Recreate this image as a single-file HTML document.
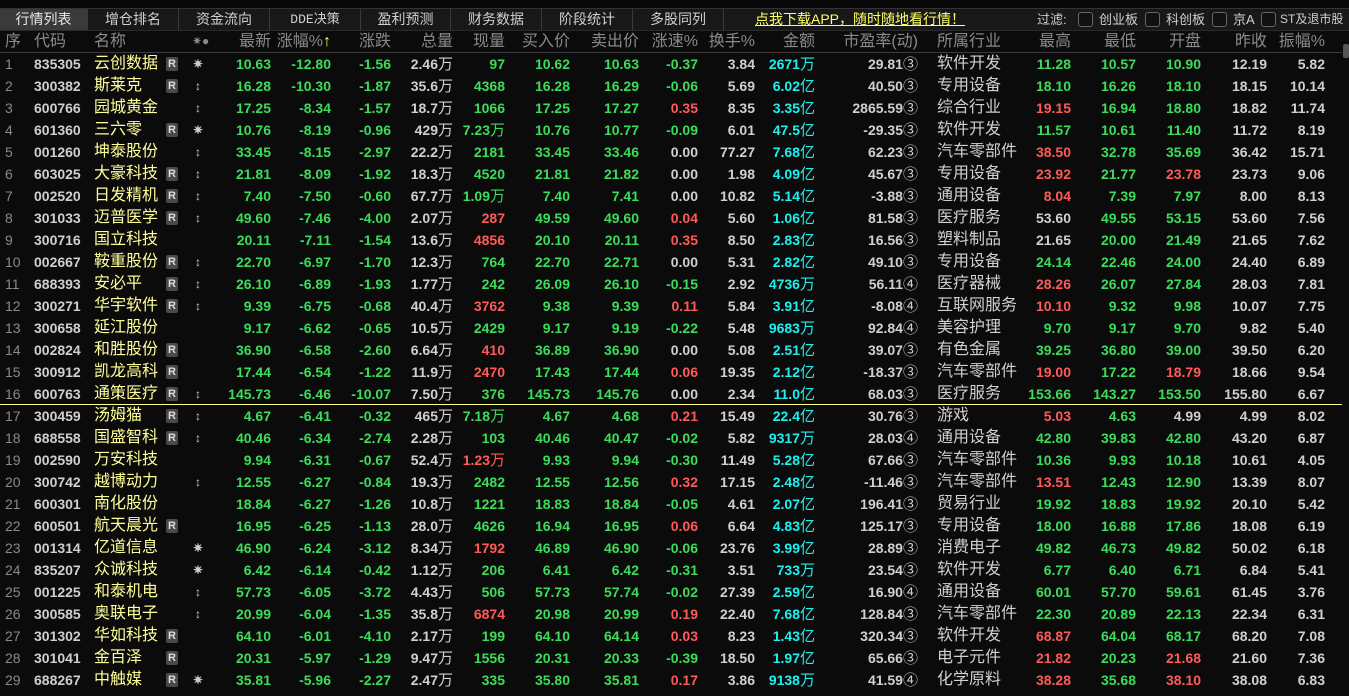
<!DOCTYPE html>
<html><head><meta charset="utf-8">
<style>
*{margin:0;padding:0;box-sizing:border-box}
html,body{width:1349px;height:696px;overflow:hidden;background:#0b0b0b;font-family:"Liberation Sans","Noto Sans CJK SC",sans-serif;color:#d0d0d0}
#top{position:absolute;left:0;top:0;width:1349px;height:9px;background:#080808;border-bottom:1px solid #333}
#tabs{position:absolute;left:0;top:9px;width:1349px;height:22px;background:#181818;border-bottom:1px solid #2a2a2a}
.tab{position:absolute;top:0;height:21px;line-height:21px;text-align:center;font-size:14px;color:#cfcfcf;border-right:1px solid #3a3a3a}
.tab.act{background:#3a3a3a;color:#e8e8e8}
#link{position:absolute;left:755px;top:0;line-height:21px;font-size:14px;color:#ffff66;text-decoration:underline}
.flt{position:absolute;top:0;line-height:21px;font-size:13px;color:#cfcfcf;white-space:nowrap}
.cb{position:absolute;top:3px;width:15px;height:15px;border:1px solid #666;border-radius:3px;background:#111}
#hdr{position:absolute;left:0;top:31px;width:1342px;height:22px;border-bottom:1px solid #3a3a3a}
#hdr span{position:absolute;top:0;line-height:21px;font-size:16px;color:#8a8a8a;white-space:nowrap}
#rows{position:absolute;left:0;top:53px;width:1342px}
.r{position:absolute;left:0;height:22px;width:1342px}
.r span{position:absolute;top:0;line-height:22px;white-space:nowrap;font-size:14px;font-weight:bold}
.r span:nth-child(1){left:5px;color:#8a8a8a;font-weight:normal}
.r span:nth-child(2){left:34px;color:#d0d0d0}
.r span:nth-child(3){left:94px;color:#ffff99;font-size:16px;font-weight:normal}
.r span:nth-child(4){left:166px}
.r span:nth-child(5){left:192px;width:12px;text-align:center;color:#ccc;font-size:12px}
.r span:nth-child(6){right:1071px}
.r span:nth-child(7){right:1011px}
.r span:nth-child(8){right:951px}
.r span:nth-child(9){right:889px}
.r span:nth-child(10){right:837px}
.r span:nth-child(11){right:772px}
.r span:nth-child(12){right:703px}
.r span:nth-child(13){right:644px}
.r span:nth-child(14){right:587px}
.r span:nth-child(15){right:527px;color:#1ef0f0}
.r span:nth-child(16){right:424px}
.r span:nth-child(17){left:937px;font-size:16px;font-weight:normal;color:#d0d0d0}
.r span:nth-child(18){right:271px}
.r span:nth-child(19){right:206px}
.r span:nth-child(20){right:141px}
.r span:nth-child(21){right:75px}
.r span:nth-child(22){right:17px}
.r span:nth-child(6),.r span:nth-child(7),.r span:nth-child(8),.r span:nth-child(11),.r span:nth-child(12){color:#3ddc5a}
i{font-style:normal;font-weight:normal;font-size:15px}
.g{color:#3ddc5a!important}.d{color:#ff5a5a!important}.w{color:#d0d0d0!important}
b.R{position:absolute;top:4px;left:0;width:12px;height:14px;background:#4a4a4a;border-radius:2px;color:#ddd;font-size:11px;line-height:14px;text-align:center;font-weight:bold}
#sep{position:absolute;left:0;top:404px;width:1342px;height:1px;background:#ffff88}
#sb{position:absolute;left:1342px;top:31px;width:7px;height:665px;background:#0b0b0b}
#sbt{position:absolute;left:1343px;top:44px;width:6px;height:14px;background:#555;border-radius:2px}
</style></head><body>
<div id="top"></div>
<div id="tabs">
<div class="tab act" style="left:0;width:88px">行情列表</div>
<div class="tab" style="left:88px;width:91px">增仓排名</div>
<div class="tab" style="left:179px;width:91px">资金流向</div>
<div class="tab" style="left:270px;width:91px;font-family:'Liberation Mono','Noto Sans CJK SC',monospace;font-size:13px">DDE决策</div>
<div class="tab" style="left:361px;width:90px">盈利预测</div>
<div class="tab" style="left:451px;width:91px">财务数据</div>
<div class="tab" style="left:542px;width:91px">阶段统计</div>
<div class="tab" style="left:633px;width:91px">多股同列</div>
<div id="link">点我下载APP，随时随地看行情！</div>
<div class="flt" style="left:1037px">过滤:</div>
<div class="cb" style="left:1078px"></div><div class="flt" style="left:1099px">创业板</div>
<div class="cb" style="left:1145px"></div><div class="flt" style="left:1166px">科创板</div>
<div class="cb" style="left:1212px"></div><div class="flt" style="left:1233px">京A</div>
<div class="cb" style="left:1261px"></div><div class="flt" style="left:1280px;font-size:12px">ST及退市股</div>
</div>
<div id="hdr">
<span style="left:5px">序</span><span style="left:34px">代码</span><span style="left:94px">名称</span>
<span style="left:192px;font-size:12px">✷●</span>
<span style="right:1071px">最新</span><span style="right:1011px">涨幅%<b style="color:#ffff66">↑</b></span>
<span style="right:951px">涨跌</span><span style="right:889px">总量</span><span style="right:837px">现量</span>
<span style="right:772px">买入价</span><span style="right:703px">卖出价</span><span style="right:644px">涨速%</span>
<span style="right:587px">换手%</span><span style="right:527px">金额</span><span style="right:424px">市盈率(动)</span>
<span style="left:937px">所属行业</span><span style="right:271px">最高</span><span style="right:206px">最低</span>
<span style="right:141px">开盘</span><span style="right:75px">昨收</span><span style="right:17px">振幅%</span>
</div>
<div id="rows">
<div class="r" style="top:0px"><span>1</span><span>835305</span><span>云创数据</span><span><b class="R">R</b></span><span>✷</span><span>10.63</span><span>-12.80</span><span>-1.56</span><span>2.46<i>万</i></span><span class="g">97</span><span>10.62</span><span>10.63</span><span class="g">-0.37</span><span>3.84</span><span>2671<i>万</i></span><span>29.81<i>③</i></span><span>软件开发</span><span class="g">11.28</span><span class="g">10.57</span><span class="g">10.90</span><span>12.19</span><span>5.82</span></div>
<div class="r" style="top:22px"><span>2</span><span>300382</span><span>斯莱克</span><span><b class="R">R</b></span><span>↕</span><span>16.28</span><span>-10.30</span><span>-1.87</span><span>35.6<i>万</i></span><span class="g">4368</span><span>16.28</span><span>16.29</span><span class="g">-0.06</span><span>5.69</span><span>6.02<i>亿</i></span><span>40.50<i>③</i></span><span>专用设备</span><span class="g">18.10</span><span class="g">16.26</span><span class="g">18.10</span><span>18.15</span><span>10.14</span></div>
<div class="r" style="top:44px"><span>3</span><span>600766</span><span>园城黄金</span><span></span><span>↕</span><span>17.25</span><span>-8.34</span><span>-1.57</span><span>18.7<i>万</i></span><span class="g">1066</span><span>17.25</span><span>17.27</span><span class="d">0.35</span><span>8.35</span><span>3.35<i>亿</i></span><span>2865.59<i>③</i></span><span>综合行业</span><span class="d">19.15</span><span class="g">16.94</span><span class="g">18.80</span><span>18.82</span><span>11.74</span></div>
<div class="r" style="top:66px"><span>4</span><span>601360</span><span>三六零</span><span><b class="R">R</b></span><span>✷</span><span>10.76</span><span>-8.19</span><span>-0.96</span><span>429<i>万</i></span><span class="g">7.23<i>万</i></span><span>10.76</span><span>10.77</span><span class="g">-0.09</span><span>6.01</span><span>47.5<i>亿</i></span><span>-29.35<i>③</i></span><span>软件开发</span><span class="g">11.57</span><span class="g">10.61</span><span class="g">11.40</span><span>11.72</span><span>8.19</span></div>
<div class="r" style="top:88px"><span>5</span><span>001260</span><span>坤泰股份</span><span></span><span>↕</span><span>33.45</span><span>-8.15</span><span>-2.97</span><span>22.2<i>万</i></span><span class="g">2181</span><span>33.45</span><span>33.46</span><span class="w">0.00</span><span>77.27</span><span>7.68<i>亿</i></span><span>62.23<i>③</i></span><span>汽车零部件</span><span class="d">38.50</span><span class="g">32.78</span><span class="g">35.69</span><span>36.42</span><span>15.71</span></div>
<div class="r" style="top:110px"><span>6</span><span>603025</span><span>大豪科技</span><span><b class="R">R</b></span><span>↕</span><span>21.81</span><span>-8.09</span><span>-1.92</span><span>18.3<i>万</i></span><span class="g">4520</span><span>21.81</span><span>21.82</span><span class="w">0.00</span><span>1.98</span><span>4.09<i>亿</i></span><span>45.67<i>③</i></span><span>专用设备</span><span class="d">23.92</span><span class="g">21.77</span><span class="d">23.78</span><span>23.73</span><span>9.06</span></div>
<div class="r" style="top:132px"><span>7</span><span>002520</span><span>日发精机</span><span><b class="R">R</b></span><span>↕</span><span>7.40</span><span>-7.50</span><span>-0.60</span><span>67.7<i>万</i></span><span class="g">1.09<i>万</i></span><span>7.40</span><span>7.41</span><span class="w">0.00</span><span>10.82</span><span>5.14<i>亿</i></span><span>-3.88<i>③</i></span><span>通用设备</span><span class="d">8.04</span><span class="g">7.39</span><span class="g">7.97</span><span>8.00</span><span>8.13</span></div>
<div class="r" style="top:154px"><span>8</span><span>301033</span><span>迈普医学</span><span><b class="R">R</b></span><span>↕</span><span>49.60</span><span>-7.46</span><span>-4.00</span><span>2.07<i>万</i></span><span class="d">287</span><span>49.59</span><span>49.60</span><span class="d">0.04</span><span>5.60</span><span>1.06<i>亿</i></span><span>81.58<i>③</i></span><span>医疗服务</span><span class="w">53.60</span><span class="g">49.55</span><span class="g">53.15</span><span>53.60</span><span>7.56</span></div>
<div class="r" style="top:176px"><span>9</span><span>300716</span><span>国立科技</span><span></span><span></span><span>20.11</span><span>-7.11</span><span>-1.54</span><span>13.6<i>万</i></span><span class="d">4856</span><span>20.10</span><span>20.11</span><span class="d">0.35</span><span>8.50</span><span>2.83<i>亿</i></span><span>16.56<i>③</i></span><span>塑料制品</span><span class="w">21.65</span><span class="g">20.00</span><span class="g">21.49</span><span>21.65</span><span>7.62</span></div>
<div class="r" style="top:198px"><span>10</span><span>002667</span><span>鞍重股份</span><span><b class="R">R</b></span><span>↕</span><span>22.70</span><span>-6.97</span><span>-1.70</span><span>12.3<i>万</i></span><span class="g">764</span><span>22.70</span><span>22.71</span><span class="w">0.00</span><span>5.31</span><span>2.82<i>亿</i></span><span>49.10<i>③</i></span><span>专用设备</span><span class="g">24.14</span><span class="g">22.46</span><span class="g">24.00</span><span>24.40</span><span>6.89</span></div>
<div class="r" style="top:220px"><span>11</span><span>688393</span><span>安必平</span><span><b class="R">R</b></span><span>↕</span><span>26.10</span><span>-6.89</span><span>-1.93</span><span>1.77<i>万</i></span><span class="g">242</span><span>26.09</span><span>26.10</span><span class="g">-0.15</span><span>2.92</span><span>4736<i>万</i></span><span>56.11<i>④</i></span><span>医疗器械</span><span class="d">28.26</span><span class="g">26.07</span><span class="g">27.84</span><span>28.03</span><span>7.81</span></div>
<div class="r" style="top:242px"><span>12</span><span>300271</span><span>华宇软件</span><span><b class="R">R</b></span><span>↕</span><span>9.39</span><span>-6.75</span><span>-0.68</span><span>40.4<i>万</i></span><span class="d">3762</span><span>9.38</span><span>9.39</span><span class="d">0.11</span><span>5.84</span><span>3.91<i>亿</i></span><span>-8.08<i>④</i></span><span>互联网服务</span><span class="d">10.10</span><span class="g">9.32</span><span class="g">9.98</span><span>10.07</span><span>7.75</span></div>
<div class="r" style="top:264px"><span>13</span><span>300658</span><span>延江股份</span><span></span><span></span><span>9.17</span><span>-6.62</span><span>-0.65</span><span>10.5<i>万</i></span><span class="g">2429</span><span>9.17</span><span>9.19</span><span class="g">-0.22</span><span>5.48</span><span>9683<i>万</i></span><span>92.84<i>④</i></span><span>美容护理</span><span class="g">9.70</span><span class="g">9.17</span><span class="g">9.70</span><span>9.82</span><span>5.40</span></div>
<div class="r" style="top:286px"><span>14</span><span>002824</span><span>和胜股份</span><span><b class="R">R</b></span><span></span><span>36.90</span><span>-6.58</span><span>-2.60</span><span>6.64<i>万</i></span><span class="d">410</span><span>36.89</span><span>36.90</span><span class="w">0.00</span><span>5.08</span><span>2.51<i>亿</i></span><span>39.07<i>③</i></span><span>有色金属</span><span class="g">39.25</span><span class="g">36.80</span><span class="g">39.00</span><span>39.50</span><span>6.20</span></div>
<div class="r" style="top:308px"><span>15</span><span>300912</span><span>凯龙高科</span><span><b class="R">R</b></span><span></span><span>17.44</span><span>-6.54</span><span>-1.22</span><span>11.9<i>万</i></span><span class="d">2470</span><span>17.43</span><span>17.44</span><span class="d">0.06</span><span>19.35</span><span>2.12<i>亿</i></span><span>-18.37<i>③</i></span><span>汽车零部件</span><span class="d">19.00</span><span class="g">17.22</span><span class="d">18.79</span><span>18.66</span><span>9.54</span></div>
<div class="r" style="top:330px"><span>16</span><span>600763</span><span>通策医疗</span><span><b class="R">R</b></span><span>↕</span><span>145.73</span><span>-6.46</span><span>-10.07</span><span>7.50<i>万</i></span><span class="g">376</span><span>145.73</span><span>145.76</span><span class="w">0.00</span><span>2.34</span><span>11.0<i>亿</i></span><span>68.03<i>③</i></span><span>医疗服务</span><span class="g">153.66</span><span class="g">143.27</span><span class="g">153.50</span><span>155.80</span><span>6.67</span></div>
<div class="r" style="top:352px"><span>17</span><span>300459</span><span>汤姆猫</span><span><b class="R">R</b></span><span>↕</span><span>4.67</span><span>-6.41</span><span>-0.32</span><span>465<i>万</i></span><span class="g">7.18<i>万</i></span><span>4.67</span><span>4.68</span><span class="d">0.21</span><span>15.49</span><span>22.4<i>亿</i></span><span>30.76<i>③</i></span><span>游戏</span><span class="d">5.03</span><span class="g">4.63</span><span class="w">4.99</span><span>4.99</span><span>8.02</span></div>
<div class="r" style="top:374px"><span>18</span><span>688558</span><span>国盛智科</span><span><b class="R">R</b></span><span>↕</span><span>40.46</span><span>-6.34</span><span>-2.74</span><span>2.28<i>万</i></span><span class="g">103</span><span>40.46</span><span>40.47</span><span class="g">-0.02</span><span>5.82</span><span>9317<i>万</i></span><span>28.03<i>④</i></span><span>通用设备</span><span class="g">42.80</span><span class="g">39.83</span><span class="g">42.80</span><span>43.20</span><span>6.87</span></div>
<div class="r" style="top:396px"><span>19</span><span>002590</span><span>万安科技</span><span></span><span></span><span>9.94</span><span>-6.31</span><span>-0.67</span><span>52.4<i>万</i></span><span class="d">1.23<i>万</i></span><span>9.93</span><span>9.94</span><span class="g">-0.30</span><span>11.49</span><span>5.28<i>亿</i></span><span>67.66<i>③</i></span><span>汽车零部件</span><span class="g">10.36</span><span class="g">9.93</span><span class="g">10.18</span><span>10.61</span><span>4.05</span></div>
<div class="r" style="top:418px"><span>20</span><span>300742</span><span>越博动力</span><span></span><span>↕</span><span>12.55</span><span>-6.27</span><span>-0.84</span><span>19.3<i>万</i></span><span class="g">2482</span><span>12.55</span><span>12.56</span><span class="d">0.32</span><span>17.15</span><span>2.48<i>亿</i></span><span>-11.46<i>③</i></span><span>汽车零部件</span><span class="d">13.51</span><span class="g">12.43</span><span class="g">12.90</span><span>13.39</span><span>8.07</span></div>
<div class="r" style="top:440px"><span>21</span><span>600301</span><span>南化股份</span><span></span><span></span><span>18.84</span><span>-6.27</span><span>-1.26</span><span>10.8<i>万</i></span><span class="g">1221</span><span>18.83</span><span>18.84</span><span class="g">-0.05</span><span>4.61</span><span>2.07<i>亿</i></span><span>196.41<i>③</i></span><span>贸易行业</span><span class="g">19.92</span><span class="g">18.83</span><span class="g">19.92</span><span>20.10</span><span>5.42</span></div>
<div class="r" style="top:462px"><span>22</span><span>600501</span><span>航天晨光</span><span><b class="R">R</b></span><span></span><span>16.95</span><span>-6.25</span><span>-1.13</span><span>28.0<i>万</i></span><span class="g">4626</span><span>16.94</span><span>16.95</span><span class="d">0.06</span><span>6.64</span><span>4.83<i>亿</i></span><span>125.17<i>③</i></span><span>专用设备</span><span class="g">18.00</span><span class="g">16.88</span><span class="g">17.86</span><span>18.08</span><span>6.19</span></div>
<div class="r" style="top:484px"><span>23</span><span>001314</span><span>亿道信息</span><span></span><span>✷</span><span>46.90</span><span>-6.24</span><span>-3.12</span><span>8.34<i>万</i></span><span class="d">1792</span><span>46.89</span><span>46.90</span><span class="g">-0.06</span><span>23.76</span><span>3.99<i>亿</i></span><span>28.89<i>③</i></span><span>消费电子</span><span class="g">49.82</span><span class="g">46.73</span><span class="g">49.82</span><span>50.02</span><span>6.18</span></div>
<div class="r" style="top:506px"><span>24</span><span>835207</span><span>众诚科技</span><span></span><span>✷</span><span>6.42</span><span>-6.14</span><span>-0.42</span><span>1.12<i>万</i></span><span class="g">206</span><span>6.41</span><span>6.42</span><span class="g">-0.31</span><span>3.51</span><span>733<i>万</i></span><span>23.54<i>③</i></span><span>软件开发</span><span class="g">6.77</span><span class="g">6.40</span><span class="g">6.71</span><span>6.84</span><span>5.41</span></div>
<div class="r" style="top:528px"><span>25</span><span>001225</span><span>和泰机电</span><span></span><span>↕</span><span>57.73</span><span>-6.05</span><span>-3.72</span><span>4.43<i>万</i></span><span class="g">506</span><span>57.73</span><span>57.74</span><span class="g">-0.02</span><span>27.39</span><span>2.59<i>亿</i></span><span>16.90<i>④</i></span><span>通用设备</span><span class="g">60.01</span><span class="g">57.70</span><span class="g">59.61</span><span>61.45</span><span>3.76</span></div>
<div class="r" style="top:550px"><span>26</span><span>300585</span><span>奥联电子</span><span></span><span>↕</span><span>20.99</span><span>-6.04</span><span>-1.35</span><span>35.8<i>万</i></span><span class="d">6874</span><span>20.98</span><span>20.99</span><span class="d">0.19</span><span>22.40</span><span>7.68<i>亿</i></span><span>128.84<i>③</i></span><span>汽车零部件</span><span class="g">22.30</span><span class="g">20.89</span><span class="g">22.13</span><span>22.34</span><span>6.31</span></div>
<div class="r" style="top:572px"><span>27</span><span>301302</span><span>华如科技</span><span><b class="R">R</b></span><span></span><span>64.10</span><span>-6.01</span><span>-4.10</span><span>2.17<i>万</i></span><span class="g">199</span><span>64.10</span><span>64.14</span><span class="d">0.03</span><span>8.23</span><span>1.43<i>亿</i></span><span>320.34<i>③</i></span><span>软件开发</span><span class="d">68.87</span><span class="g">64.04</span><span class="g">68.17</span><span>68.20</span><span>7.08</span></div>
<div class="r" style="top:594px"><span>28</span><span>301041</span><span>金百泽</span><span><b class="R">R</b></span><span></span><span>20.31</span><span>-5.97</span><span>-1.29</span><span>9.47<i>万</i></span><span class="g">1556</span><span>20.31</span><span>20.33</span><span class="g">-0.39</span><span>18.50</span><span>1.97<i>亿</i></span><span>65.66<i>③</i></span><span>电子元件</span><span class="d">21.82</span><span class="g">20.23</span><span class="d">21.68</span><span>21.60</span><span>7.36</span></div>
<div class="r" style="top:616px"><span>29</span><span>688267</span><span>中触媒</span><span><b class="R">R</b></span><span>✷</span><span>35.81</span><span>-5.96</span><span>-2.27</span><span>2.47<i>万</i></span><span class="g">335</span><span>35.80</span><span>35.81</span><span class="d">0.17</span><span>3.86</span><span>9138<i>万</i></span><span>41.59<i>④</i></span><span>化学原料</span><span class="d">38.28</span><span class="g">35.68</span><span class="d">38.10</span><span>38.08</span><span>6.83</span></div>
</div>
<div id="sep"></div>
<div id="sb"></div><div id="sbt"></div>
</body></html>
